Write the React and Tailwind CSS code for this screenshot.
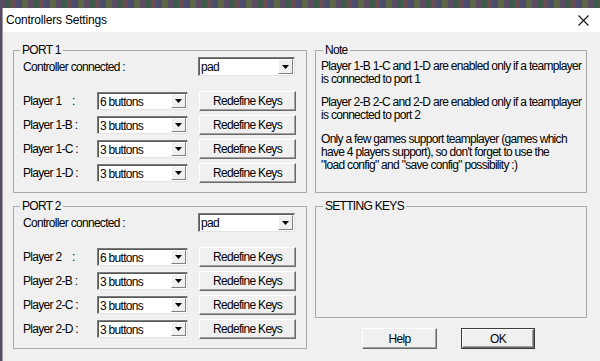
import React from "react";

function Combo({ value, className }) {
  return (
    <div
      className={`flex bg-white border border-t-[#7a7a7a] border-l-[#7a7a7a] border-b-[#e3e3e3] border-r-[#e3e3e3] shadow-[inset_1px_1px_0_#5a5a5a] ${className}`}
    >
      <div className="flex-1 pl-[2px] pt-[1px] flex items-center leading-[14px]">{value}</div>
      <div className="w-[15px] my-[1px] mr-[1px] flex items-center justify-center bg-[#f0f0f0] border border-t-white border-l-white border-b-[#808080] border-r-[#808080]">
        <svg width="7" height="4" viewBox="0 0 7 4">
          <path d="M0 0H7L3.5 4Z" fill="#000" />
        </svg>
      </div>
    </div>
  );
}

function Btn({ children, className = "" }) {
  return (
    <div
      className={`flex items-center justify-center bg-[#f0f0f0] border border-t-white border-l-white border-b-[#6a6a6a] border-r-[#6a6a6a] shadow-[inset_-1px_-1px_0_#a0a0a0] ${className}`}
    >
      {children}
    </div>
  );
}

function PlayerRow({ label, value }) {
  return (
    <div className="flex items-center h-[20px]">
      <span className="w-[74px] whitespace-pre">{label}</span>
      <Combo value={value} className="w-[91px] h-[18px]" />
      <Btn className="ml-[11px] w-[97px] h-[20px]">Redefine Keys</Btn>
    </div>
  );
}

function Port({ n }) {
  return (
    <fieldset className="w-[294px] h-[150px] border border-[#a9a9a9]">
      <legend className="ml-[6px] px-[2px] leading-[14px]">PORT {n}</legend>
      <div className="pl-[9px]">
        <div className="flex items-center h-[19px]">
          <span className="w-[175px]">Controller connected :</span>
          <Combo value="pad" className="w-[97px] h-[19px]" />
        </div>
        <div className="mt-[15px] flex flex-col gap-[4px]">
          <PlayerRow label={`Player ${n}    :`} value="6 buttons" />
          <PlayerRow label={`Player ${n}-B :`} value="3 buttons" />
          <PlayerRow label={`Player ${n}-C :`} value="3 buttons" />
          <PlayerRow label={`Player ${n}-D :`} value="3 buttons" />
        </div>
      </div>
    </fieldset>
  );
}

export default function App() {
  return (
    <div className="w-[600px] h-[361px] overflow-hidden pt-[8px] pl-[2px] bg-[repeating-linear-gradient(90deg,#5b4a63_0px,#5b4a63_5px,#3f5a48_5px,#3f5a48_11px,#6b4b52_11px,#6b4b52_16px,#4a4d6b_16px,#4a4d6b_22px,#5e6648_22px,#5e6648_28px)] font-['Liberation_Sans',Arial,sans-serif] text-[12px] text-black tracking-[-0.7px]">
      <div className="h-[353px] flex flex-col border-l border-[#9a9a9a] bg-[#f0f0f0]">
        <div className="h-[24px] shrink-0 bg-white flex items-center justify-between pl-[3px] pr-[11px]">
          <span className="tracking-[-0.2px]">Controllers Settings</span>
          <svg width="11" height="11" viewBox="0 0 11 11">
            <path d="M0.5 0.5L10.5 10.5M10.5 0.5L0.5 10.5" stroke="#111" strokeWidth="1.1" />
          </svg>
        </div>
        <div className="flex-1 flex pl-[10px] pt-[11px] gap-[8px]">
          <div className="flex flex-col gap-[6px]">
            <Port n={1} />
            <Port n={2} />
          </div>
          <div className="flex flex-col">
            <fieldset className="w-[272px] h-[150px] border border-[#a9a9a9]">
              <legend className="ml-[7px] px-[2px] leading-[14px]">Note</legend>
              <div className="pl-[5px] pt-[3px] leading-[13px]">
                <p>Player 1-B 1-C and 1-D are enabled only if a teamplayer</p>
                <p>is connected to port 1</p>
                <p className="mt-[10px]">Player 2-B 2-C and 2-D are enabled only if a teamplayer</p>
                <p>is connected to port 2</p>
                <p className="mt-[11px]">Only a few games support teamplayer (games which</p>
                <p>have 4 players support), so don't forget to use the</p>
                <p>"load config" and "save config" possibility :)</p>
              </div>
            </fieldset>
            <fieldset className="mt-[6px] w-[272px] h-[119px] border border-[#a9a9a9]">
              <legend className="ml-[7px] px-[2px] leading-[14px]">SETTING KEYS</legend>
            </fieldset>
            <div className="mt-[10px] pl-[47px] flex gap-[24px]">
              <Btn className="w-[75px] h-[21px]">Help</Btn>
              <div className="w-[74px] h-[21px] border border-[#3c3c3c] flex">
                <Btn className="flex-1">OK</Btn>
              </div>
            </div>
          </div>
        </div>
      </div>
    </div>
  );
}
